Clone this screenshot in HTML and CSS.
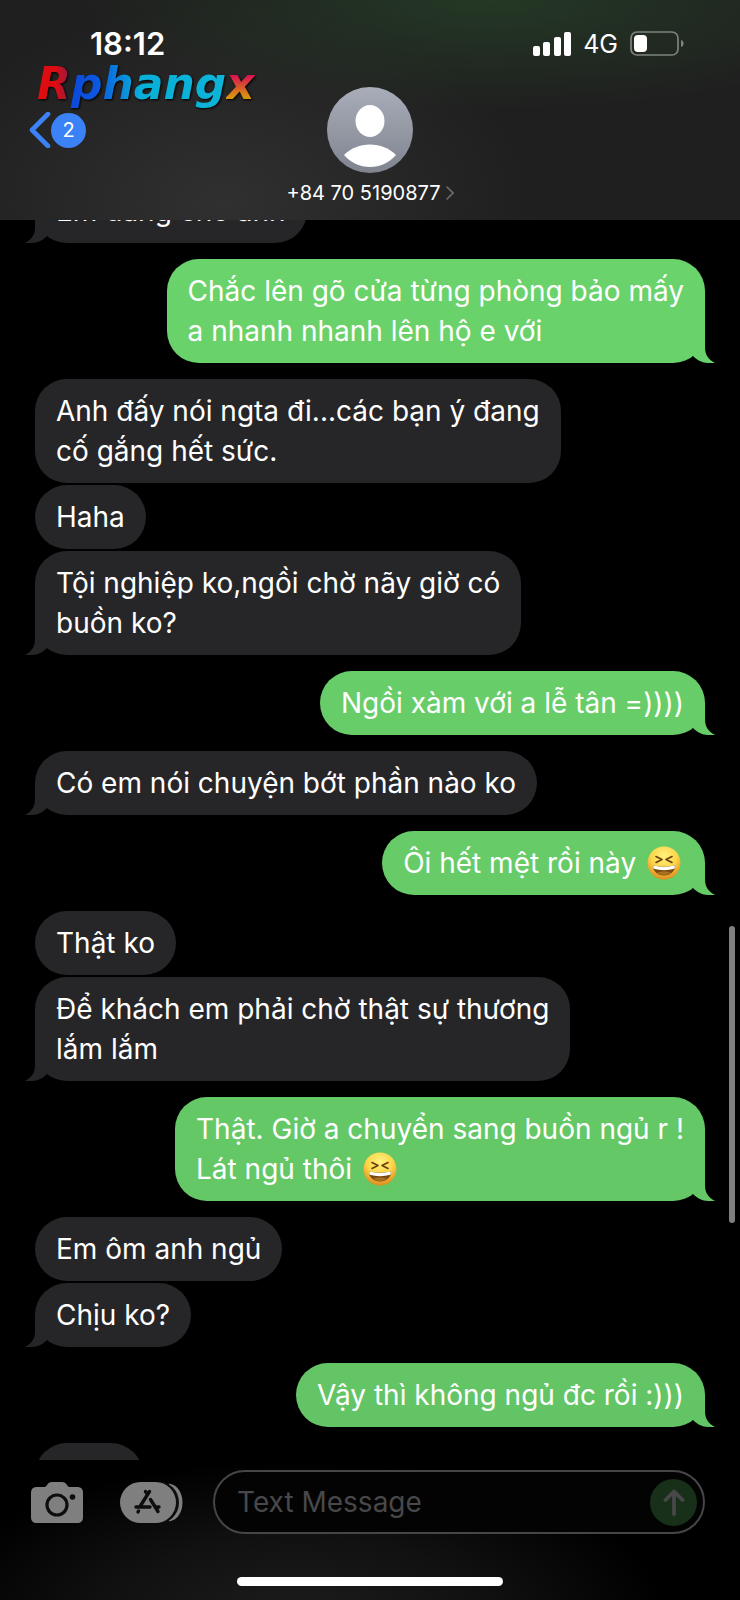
FILE: index.html
```html
<!DOCTYPE html>
<html lang="vi">
<head>
<meta charset="utf-8">
<meta name="viewport" content="width=device-width, initial-scale=1">
<title>+84 70 5190877</title>
<link rel="stylesheet" href="styles.css">
</head>
<body>
<svg class="sprite" aria-hidden="true">
  <defs>
    <radialGradient id="face" cx="50%" cy="28%" r="72%">
      <stop offset="0" stop-color="#fff27c"/>
      <stop offset=".55" stop-color="#fbd54a"/>
      <stop offset="1" stop-color="#e08a1c"/>
    </radialGradient>
    <symbol id="laugh" viewBox="0 0 34 34">
      <circle cx="17" cy="17" r="16.500" fill="url(#face)"/>
      <path d="M9 10.500l6 3-6 3M25 10.500l-6 3 6 3" fill="none" stroke="#6b3d0c" stroke-width="1.600" stroke-linecap="round" stroke-linejoin="round"/>
      <path d="M6 19.500q11 2.500 22 0c.5 5.500-4.500 10-11 10s-11.500-4.500-11-10z" fill="#7a4a10"/>
      <path d="M6.300 19.600q10.700 2.600 21.400 0c.3 1.200.2 2.200-.4 3.200-6.500 1.900-14 1.900-20.600 0-.5-1-.6-2-.4-3.200z" fill="#fff"/>
      <path d="M10 26.800c4-1.600 10-1.600 14 0-4 3-10 3-14 0z" fill="#a8731f"/>
    </symbol>
  </defs>
</svg>
<div class="screen">
  <header class="header">
    <div class="status">
      <time class="clock">18:12</time>
      <div class="signals">
        <svg class="bars" viewBox="0 0 38 24" role="img" aria-label="Signal"><g fill="#fff"><rect y="14" width="7" height="10" rx="2"/><rect x="10" y="10" width="7" height="14" rx="2"/><rect x="21" y="5" width="7" height="19" rx="2"/><rect x="31" width="7" height="24" rx="2"/></g></svg>
        <span class="network">4G</span>
        <svg class="battery" viewBox="0 0 54 25" role="img" aria-label="Battery"><rect x="1" y="1" width="47" height="23" rx="6" fill="none" stroke="#7d847e" stroke-width="1.700"/><path d="M51 9c3.500 1 3.500 6 0 7z" fill="#7d847e"/><rect x="4" y="4" width="13" height="17" rx="4" fill="#fff"/></svg>
      </div>
    </div>
    <div class="contact-row">
      <button class="back" type="button" aria-label="Back, 2 unread">
        <svg class="back-arrow" viewBox="0 0 22 36"><path d="M19 2L3 18l16 16" fill="none" stroke="#3b82f6" stroke-width="4.600" stroke-linecap="round" stroke-linejoin="round"/></svg>
        <span class="unread">2</span>
      </button>
      <button class="contact" type="button">
        <svg class="avatar" viewBox="0 0 86 86" aria-hidden="true"><defs><linearGradient id="av" x2="0" y2="1"><stop stop-color="#a9adb9"/><stop offset="1" stop-color="#7f848f"/></linearGradient></defs><circle cx="43" cy="43" r="43" fill="url(#av)"/><ellipse cx="43" cy="34" rx="14.500" ry="16" fill="#fff"/><path d="M17 68c7-7 16-10.500 26-10.500s19 3.500 26 10.500C62 76 53 80 43 80s-19-4-26-12z" fill="#fff"/></svg>
        <span class="number">+84 70 5190877<svg class="more" viewBox="0 0 8 14" aria-hidden="true"><path d="M1 1l6 6-6 6" fill="none" stroke="#6c6c6c" stroke-width="1.600" stroke-linecap="round"/></svg></span>
      </button>
    </div>
    <div class="watermark"><span class="wm-main">Rphang</span><span class="wm-x">x</span></div>
  </header>

  <main class="thread">
    <div class="messages">
      <p class="bubble in tail">Em đang chờ anh</p>
      <p class="bubble out tail turn">Chắc lên gõ cửa từng phòng bảo mấy<br>a nhanh nhanh lên hộ e với</p>
      <p class="bubble in turn">Anh đấy nói ngta đi...các bạn ý đang<br>cố gắng hết sức.</p>
      <p class="bubble in">Haha</p>
      <p class="bubble in tail">Tội nghiệp ko,ngồi chờ nãy giờ có<br>buồn ko?</p>
      <p class="bubble out tail turn">Ngồi xàm với a lễ tân =))))</p>
      <p class="bubble in tail turn">Có em nói chuyện bớt phần nào ko</p>
      <p class="bubble out tail turn">Ôi hết mệt rồi này <svg class="emoji" role="img" aria-label="😆"><use href="#laugh"/></svg></p>
      <p class="bubble in turn">Thật ko</p>
      <p class="bubble in tail">Để khách em phải chờ thật sự thương<br>lắm lắm</p>
      <p class="bubble out tail turn">Thật. Giờ a chuyển sang buồn ngủ r !<br>Lát ngủ thôi <svg class="emoji" role="img" aria-label="😆"><use href="#laugh"/></svg></p>
      <p class="bubble in turn">Em ôm anh ngủ</p>
      <p class="bubble in tail">Chịu ko?</p>
      <p class="bubble out tail turn">Vậy thì không ngủ đc rồi :)))</p>
      <p class="bubble in turn next" aria-hidden="true"></p>
    </div>
  </main>

  <footer class="footer">
    <form class="composer">
      <button class="tool" type="button" aria-label="Camera">
        <svg class="camera" viewBox="0 0 52 41"><path d="M6 5h7c1.500 0 2-.5 3-2 1.200-2 2.500-3 5-3h10c2.500 0 3.800 1 5 3 1 1.500 1.500 2 3 2h7c4 0 6 2 6 6v24c0 4-2 6-6 6H6c-4 0-6-2-6-6V11c0-4 2-6 6-6z" fill="#7f7f7f"/><circle cx="26" cy="23" r="10" fill="none" stroke="#0d0d0d" stroke-width="3.200"/><circle cx="41.500" cy="15" r="2.800" fill="#0d0d0d"/></svg>
      </button>
      <button class="tool" type="button" aria-label="Apps">
        <svg class="apps" viewBox="0 0 64 41"><path d="M49 1.500c18 3 18 35 0 38z" fill="#7f7f7f"/><rect x="3" y="-1" width="56" height="43" rx="21.500" fill="#0d0d0d"/><rect width="56" height="41" rx="20.500" fill="#7f7f7f"/><g fill="none" stroke="#0d0d0d" stroke-width="3.400" stroke-linecap="round"><path d="M25.500 9.500l2 3M29.500 9.500L20 24.500M16 25h14M30.500 17.500l7.500 12M35.500 25H39M18.500 29l-.5.900"/></g></svg>
      </button>
      <div class="field">
        <input class="text" type="text" placeholder="Text Message" aria-label="Text Message">
        <button class="send" type="submit" aria-label="Send"><svg class="send-arrow" viewBox="0 0 22 27"><path d="M11 25V3M2.500 11L11 2.500 19.500 11" fill="none" stroke="#48484a" stroke-width="3.800" stroke-linecap="round" stroke-linejoin="round"/></svg></button>
      </div>
    </form>
    <div class="home"></div>
  </footer>
  <div class="scrollbar"></div>
</div>
</body>
</html>
```
FILE: styles.css
```css
* { box-sizing: border-box; }

body {
  margin: 0;
  background: #000;
  color: #fff;
  font-family: Inter, "Noto Sans", sans-serif;
}

button {
  border: 0;
  padding: 0;
  background: none;
  color: inherit;
  font: inherit;
}

svg { display: block; flex: none; }

.sprite { position: absolute; width: 0; height: 0; }

.screen {
  position: relative;
  display: flex;
  flex-direction: column;
  height: 100vh;
  overflow: hidden;
}

/* Header */
.header {
  position: relative;
  flex: none;
  padding-bottom: 15px;
  background:
    radial-gradient(ellipse 55% 50% at 66% 0, #243825, transparent),
    radial-gradient(ellipse 42% 90% at 30% 92%, #303030, transparent),
    #1f1f1f;
}

.status {
  display: flex;
  justify-content: space-between;
  align-items: center;
  height: 87px;
  padding: 0 56px 0 90px;
}

.clock { font-size: 31px; font-weight: 600; }

.signals { display: flex; align-items: center; gap: 12px; }
.bars { width: 38px; height: 24px; }
.network { font-size: 25px; line-height: 30px; }
.battery { width: 54px; height: 25px; }

.contact-row {
  display: grid;
  grid-template-columns: 1fr auto 1fr;
}

.back {
  display: flex;
  align-items: center;
  justify-self: start;
  height: 86px;
  margin-left: 29px;
}
.back-arrow { width: 22px; height: 36px; }
.unread {
  width: 35px;
  border-radius: 50%;
  background: #3b82f6;
  font-size: 20px;
  line-height: 35px;
  text-align: center;
}

.contact {
  display: flex;
  flex-direction: column;
  align-items: center;
  gap: 8px;
}
.avatar { width: 86px; height: 86px; }
.number {
  display: flex;
  align-items: center;
  gap: 5px;
  font-size: 20px;
  line-height: 24px;
}
.more { width: 8px; height: 14px; }

.watermark {
  position: absolute;
  top: 56px;
  left: 37px;
  font: italic bold 44px/56px "DejaVu Sans", sans-serif;
  filter: drop-shadow(1px 1px 1px #000);
}
.wm-main, .wm-x {
  color: transparent;
  background-clip: text;
  -webkit-background-clip: text;
}
.wm-main { background-image: linear-gradient(90deg, #dc0c10 10%, #a01840 16%, #0c48d8 18%, #0c58e0 32%, #08b0d8 55%, #0cb4d8); }
.wm-x { background-image: linear-gradient(#d81450 35%, #d89010 75%); }

/* Messages */
.thread {
  flex: 1;
  min-height: 0;
  overflow: hidden;
}

.messages {
  display: flex;
  flex-direction: column;
  align-items: flex-start;
  gap: 2px;
  margin-top: -41px;
  padding: 0 35px;
}

.bubble {
  position: relative;
  margin: 0;
  padding: 12px 21px;
  border-radius: 32px;
  font-size: 28px;
  line-height: 40px;
  white-space: nowrap;
}
.turn { margin-top: 14px; }
.in { background: #262628; }
.out {
  align-self: flex-end;
  background: linear-gradient(#6cd66c, #62c264) fixed;
}
.next { width: 108px; height: 64px; }

.tail::after {
  content: "";
  position: absolute;
  right: -10px;
  bottom: 0;
  width: 22px;
  height: 32px;
  background: inherit;
  clip-path: path("M0 25C4 29 9 32 15 32L22 32C15 28 12 24 12 16L12 0L0 0Z");
}
.in.tail::after {
  right: auto;
  left: -10px;
  transform: scaleX(-1);
}

.emoji {
  display: inline-block;
  width: 34px;
  height: 34px;
  margin: 0 3px;
  vertical-align: -7px;
}

/* Composer */
.footer {
  flex: none;
  padding: 10px 0 14px;
  background: radial-gradient(ellipse 50% 110% at 40% 110%, #1c1c1c, #111 50%, #000);
}

.composer {
  display: flex;
  align-items: center;
  padding: 0 35px 0 31px;
}
.tool { margin-right: 37px; }
.tool + .tool { margin-right: 29px; }
.camera { width: 52px; height: 41px; }
.apps { width: 64px; height: 41px; }

.field {
  display: flex;
  align-items: center;
  flex: 1;
  min-width: 0;
  height: 64px;
  padding: 0 6px 0 22px;
  border: 2px solid #464648;
  border-radius: 32px;
  background: #030303;
}
.text {
  flex: 1;
  min-width: 0;
  border: 0;
  padding: 0;
  outline: 0;
  background: none;
  color: #fff;
  font: 28px/40px Inter, "Noto Sans", sans-serif;
}
.text::placeholder { color: #48484a; opacity: 1; }
.send {
  display: grid;
  place-items: center;
  width: 47px;
  height: 47px;
  border-radius: 50%;
  background: #182f19;
}
.send-arrow { width: 22px; height: 27px; }

.home {
  width: 36%;
  height: 9px;
  margin: 43px auto 0;
  border-radius: 5px;
  background: #fff;
}

.scrollbar {
  position: absolute;
  top: 926px;
  right: 5px;
  width: 6px;
  height: 297px;
  border-radius: 3px;
  background: #7f7f7f;
}
```
